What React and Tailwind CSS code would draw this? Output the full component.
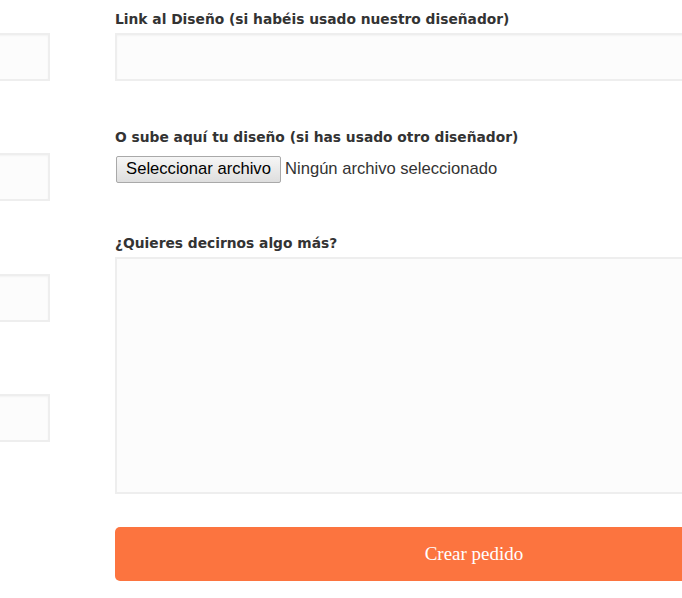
import React from "react";

const label = "block text-[13.8px] font-bold text-[#333333] leading-[20px] mb-[4px]";
const inputCls = "block h-[48px] w-full border-2 border-[#eeeeee] bg-[#fcfcfc] shadow-[inset_0_1px_2px_rgba(0,0,0,0.04)]";
const dv = { fontFamily: '"DejaVu Sans", sans-serif' };

export default function App() {
  return (
    <div className="w-[682px] h-[598px] overflow-hidden bg-white" style={{ fontFamily: '"Open Sans", "DejaVu Sans", sans-serif' }}>
      <div className="flex ml-[-200px] pt-[9px]">
        <div className="w-[250px] shrink-0 pt-[24px] flex flex-col gap-[72px]">
          <div className={inputCls}></div>
          <div className={inputCls}></div>
          <div className={inputCls + " mt-[1px]"}></div>
          <div className={inputCls}></div>
        </div>
        <div className="w-[718px] shrink-0 ml-[65px]">
          <div style={dv}>
            <label className={label}>Link al Diseño (si habéis usado nuestro diseñador)</label>
          </div>
          <div className={inputCls}></div>

          <div style={dv} className="mt-[46px]">
            <label className={label + " !mb-[9px]"}>O sube aquí tu diseño (si has usado otro diseñador)</label>
          </div>
          <div className="flex items-center h-[27px]" style={{ fontFamily: '"Liberation Sans", Arial, sans-serif' }}>
            <div className="ml-[1px] h-[27px] w-[165px] flex items-center justify-center border border-[#a9a9a9] rounded-[2px] bg-gradient-to-b from-[#f6f6f6] to-[#dedede] text-[16.6px] text-black">
              Seleccionar archivo
            </div>
            <span className="ml-[4px] text-[16.6px] text-[#333333]">Ningún archivo seleccionado</span>
          </div>

          <div style={dv} className="mt-[50px]">
            <label className={label}>¿Quieres decirnos algo más?</label>
          </div>
          <div className="h-[237px] w-full border-2 border-[#eeeeee] bg-[#fcfcfc]"></div>

          <button className="mt-[33px] h-[54px] w-full rounded-[5px] bg-[#fc743f] text-white text-[19px]" style={{ fontFamily: '"Liberation Serif", serif' }}>
            Crear pedido
          </button>
        </div>
      </div>
    </div>
  );
}
